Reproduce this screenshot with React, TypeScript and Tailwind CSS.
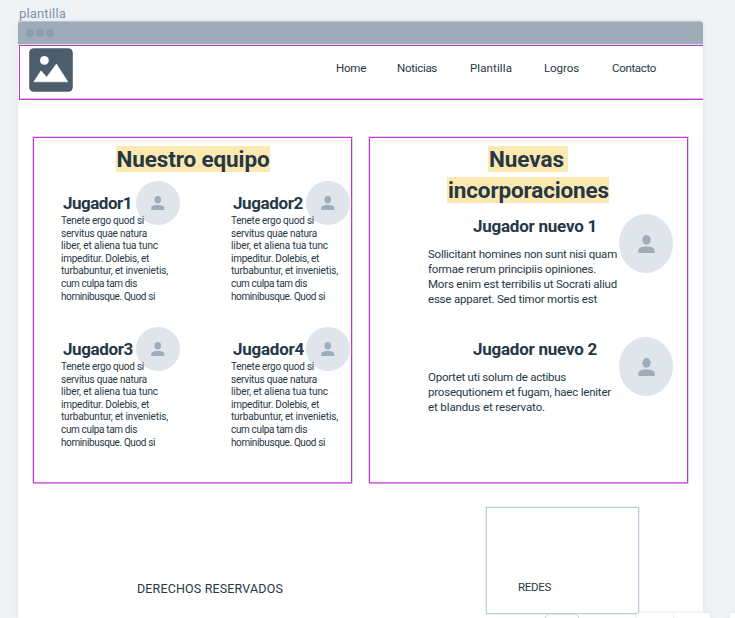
import { useLayoutEffect, useRef } from 'react';
import clsx from 'clsx';

type LineProps = { text: string; width: number; className?: string };

/* One line of copy, tracked so that it fills the given measure. */
function Line({ text, width, className }: LineProps) {
  const ref = useRef<HTMLSpanElement>(null);
  useLayoutEffect(() => {
    const el = ref.current;
    if (!el) return;
    el.style.letterSpacing = '0px';
    const natural = el.getBoundingClientRect().width;
    el.style.letterSpacing = `${(width - natural) / text.length}px`;
  }, [text, width]);
  return (
    <div className={clsx('whitespace-nowrap', className)}>
      <span ref={ref} className="inline-block">{text}</span>
    </div>
  );
}

const nav = [
  { text: 'Home', width: 30, space: 'ml-[316px]' },
  { text: 'Noticias', width: 40, space: 'ml-[31px]' },
  { text: 'Plantilla', width: 42, space: 'ml-[33px]' },
  { text: 'Logros', width: 35, space: 'ml-[32px]' },
  { text: 'Contacto', width: 44, space: 'ml-[33px]' },
];

const bio = [
  { text: 'Tenete ergo quod si', width: 83 },
  { text: 'servitus quae natura', width: 86 },
  { text: 'liber, et aliena tua tunc', width: 97 },
  { text: 'impeditur. Dolebis, et', width: 88 },
  { text: 'turbabuntur, et invenietis,', width: 107 },
  { text: 'cum culpa tam dis', width: 76 },
  { text: 'hominibusque. Quod si', width: 94 },
];

const signings = [
  {
    name: 'Jugador nuevo 1',
    width: 124,
    lines: [
      { text: 'Sollicitant homines non sunt nisi quam', width: 189 },
      { text: 'formae rerum principiis opiniones.', width: 168 },
      { text: 'Mors enim est terribilis ut Socrati aliud', width: 189 },
      { text: 'esse apparet. Sed timor mortis est', width: 169 },
    ],
  },
  {
    name: 'Jugador nuevo 2',
    width: 124,
    lines: [
      { text: 'Oportet uti solum de actibus', width: 138 },
      { text: 'prosequtionem et fugam, haec leniter', width: 183 },
      { text: 'et blandus et reservato.', width: 117 },
    ],
  },
];

function Avatar({ large = false }: { large?: boolean }) {
  return (
    <div
      className={clsx(
        'flex shrink-0 items-center justify-center rounded-[50%] bg-[#e0e5eb]',
        large ? 'h-[59px] w-[54px]' : 'h-[44px] w-[43.5px]',
      )}
    >
      <svg viewBox="0 0 17 17" preserveAspectRatio="none" className={large ? 'h-[18px] w-[17px]' : 'h-[14px] w-[13.5px]'} fill="#9eadb9">
        <ellipse cx="8.5" cy="4.6" rx="4.2" ry="4.5" />
        <path d="M.3 17v-2.6c0-2.6 4-3.6 8.2-3.6s8.2 1 8.2 3.6V17z" />
      </svg>
    </div>
  );
}

function Player({ name, width }: { name: string; width: number }) {
  return (
    <article className="w-[119px]">
      <div className="flex h-[44px]">
        <div className="w-[75px] pl-[2px] pt-[11px]">
          <Line text={name} width={width} className="text-[17px] font-bold leading-[22px]" />
        </div>
        <Avatar />
      </div>
      <div className="relative -mt-[10px]">
        {bio.map((l) => (
          <Line key={l.text} {...l} className="text-[10px] leading-[12.6px]" />
        ))}
      </div>
    </article>
  );
}

const panel =
  'h-[346px] w-[319px] border border-[#b83bcd] border-b-[#cf6fdf] shadow-[0_1px_0_0_#dc8ee8,0_0_0_1px_#ecd0f1]';
const highlight = 'h-[26px] bg-[#fce9b1] pl-[1px] text-[22.5px] font-bold leading-[26px]';

export default function App() {
  return (
    <div className="relative h-[618px] w-[735px] overflow-hidden bg-[#eff3f6] font-['Roboto','Liberation_Sans',sans-serif] text-[#263745]">
      <div className="h-[21px] pl-[19px] pt-[6px] text-[#7d91a2]">
        <Line text="plantilla" width={47} className="text-[13px] leading-[15px]" />
      </div>

      <div className="ml-[18px] h-[597px] w-[685px] rounded-t-[3px] bg-white shadow-[0_0_4px_1px_#e3e8ec]">
        <div className="flex h-[23px] items-center gap-[2px] rounded-t-[3px] border-t border-[#b9c5ce] bg-[#9dacb8] pl-[8px]">
          <i className="h-[8px] w-[8px] rounded-full bg-[#8c9dab]" />
          <i className="h-[8px] w-[8px] rounded-full bg-[#8c9dab]" />
          <i className="h-[8px] w-[8px] rounded-full bg-[#8c9dab]" />
        </div>
        <div className="h-px bg-[#d9dfe4]" />

        <header className="ml-px flex h-[55px] border-b border-l border-t border-[#b83bcd] shadow-[inset_0_-1px_0_#e3b5ea]">
          <div className="w-0 pl-[9px] pt-[2px]">
            <svg viewBox="0 0 44 44" className="h-[44px] w-[44px]">
              <rect x=".2" y=".2" width="43.6" height="43.6" rx="4.5" fill="#4c5e6b" />
              <circle cx="15.4" cy="12.4" r="4.4" fill="#fff" />
              <path d="M4.8 33.8 12 22.8l5.7 6.4L27.4 16l11.4 17.8z" fill="#fff" stroke="#fff" strokeWidth=".6" strokeLinejoin="round" />
            </svg>
          </div>
          <nav className="-ml-[9px] flex pt-[15px]">
            {nav.map((n) => (
              <a key={n.text} className={n.space}>
                <Line text={n.text} width={n.width} className="text-[11.5px] leading-[15px]" />
              </a>
            ))}
          </nav>
        </header>

        <main className="flex gap-[17px] pl-[15px] pt-[37px]">
          <section className={panel}>
            <h2 className="flex justify-center pt-[8px]">
              <Line text="Nuestro equipo" width={153} className={highlight} />
            </h2>
            <div className="ml-[27px] mt-[9px] grid auto-rows-[146px] grid-cols-[170px_119px]">
              <Player name="Jugador1" width={69} />
              <Player name="Jugador2" width={70} />
              <Player name="Jugador3" width={70} />
              <Player name="Jugador4" width={71} />
            </div>
          </section>

          <section className={panel}>
            <h2 className="flex flex-col items-center gap-[5px] pr-px pt-[8px]">
              <Line text="Nuevas" width={75} className={clsx(highlight, 'w-[80px]')} />
              <Line text="incorporaciones" width={161} className={highlight} />
            </h2>
            <div className="ml-[58px] mt-[11px]">
              {signings.map((s) => (
                <article key={s.name} className="flex h-[123px]">
                  <div className="w-[191px] pt-px">
                    <Line text={s.name} width={s.width} className="pl-[45px] text-[17px] font-bold leading-[22px]" />
                    <div className="mt-[10px]">
                      {s.lines.map((l) => (
                        <Line key={l.text} {...l} className="text-[11.5px] leading-[15px]" />
                      ))}
                    </div>
                  </div>
                  <Avatar large />
                </article>
              ))}
            </div>
          </section>
        </main>

        <footer className="flex pl-[119px] pt-[24px]">
          <div className="w-[349px] pt-[73px]">
            <Line text="DERECHOS RESERVADOS" width={146} className="text-[12.5px] leading-[17px]" />
          </div>
          <div className="h-[107px] w-[153px] border border-[#becddb] pl-[31px] pt-[72px] shadow-[0_0_0_1px_#edf1f5]">
            <Line text="REDES" width={33} className="text-[11.5px] leading-[15px]" />
          </div>
        </footer>
      </div>

      <svg className="absolute left-[544px] top-[614px] h-[4px] w-[36px]" viewBox="0 0 36 4" fill="none" stroke="#c2cdda">
        <path d="M1 4 3.5.5M35 4 32.5.5" />
        <path d="M3.5.5h29" stroke="#e0e6ed" />
      </svg>
      <div className="absolute left-[637px] top-[613px] flex h-[12px] w-[73px] rounded-[3px] bg-white shadow-[0_0_5px_#dfe4e8]">
        <div className="w-[37px] border-r border-[#edf0f3]" />
      </div>
      <div className="absolute left-[730px] top-[613px] h-[12px] w-[20px] rounded-[3px] bg-white shadow-[0_0_5px_#dfe4e8]" />
    </div>
  );
}
